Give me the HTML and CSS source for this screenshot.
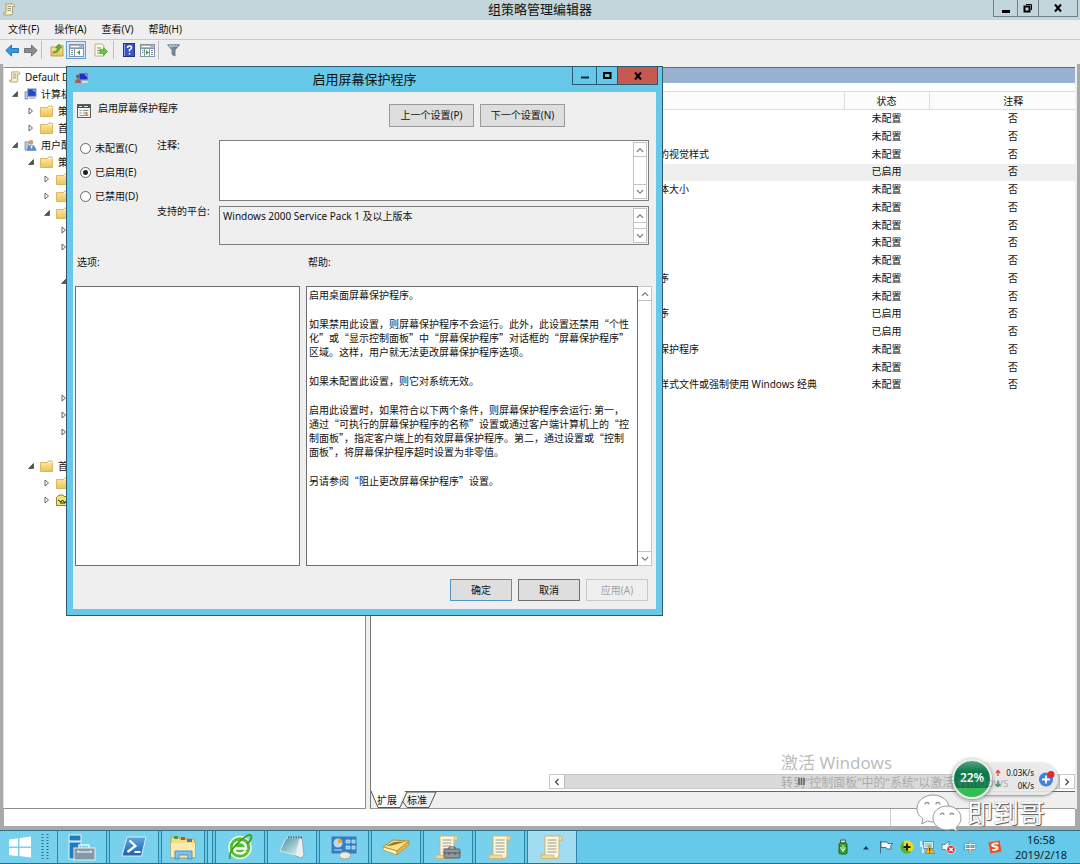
FILE: index.html
```html
<!DOCTYPE html>
<html lang="zh-CN">
<head>
<meta charset="utf-8">
<title>组策略管理编辑器</title>
<link rel="stylesheet" href="styles.css">
</head>
<body>
<svg class="defs" aria-hidden="true">
  <defs>
    <linearGradient id="g-folder" x1="0" y1="0" x2="0" y2="1"><stop offset="0" stop-color="#fdeaa6"/><stop offset="1" stop-color="#ecc356"/></linearGradient>
    <linearGradient id="g-blue" x1="0" y1="0" x2="0" y2="1"><stop offset="0" stop-color="#5fa8e0"/><stop offset="1" stop-color="#1d5ea8"/></linearGradient>
    <linearGradient id="g-note" x1="0" y1="0" x2="1" y2="1"><stop offset="0" stop-color="#3f8f9f"/><stop offset="1" stop-color="#e6f3f5"/></linearGradient>
    <linearGradient id="g-funnel" x1="0" y1="0" x2="1" y2="0"><stop offset="0" stop-color="#9db4c4"/><stop offset="1" stop-color="#47637a"/></linearGradient>
    <symbol id="folder" viewBox="0 0 13 12"><path d="M.5 2.500h7l1-1.500h3.500l.5 1v9.500H.5z" fill="url(#g-folder)" stroke="#d5a94a" stroke-width=".8"/><path d="M8 2.500h4.500" stroke="#fff6d0"/></symbol>
    <symbol id="scroll" viewBox="0 0 24 26"><path d="M5 2h15q3 0 2.500 4H19v15q0 3-3 3.500H2q-2-.5-1.500-3.500H5z" fill="#fdf6d8" stroke="#c9b377"/><path d="M19 6V3.500q.5-1.500 2-1.500 2 .5 1.500 4zM2 21h12v2q0 1.500 2 1.500H3Q.8 24 .8 21z" fill="#efdb9c" stroke="#c9b377" stroke-width=".7"/><path d="M7.500 6h9M7.500 9h9M7.500 12h9M7.500 15h9M7.500 18h9" stroke="#8f9a9c"/></symbol>
    <symbol id="scroll-small" viewBox="0 0 12 13"><path d="M3 1h7.500q1.200.3 1 2.500H9.500V10q0 2-1.500 2H1.500Q.3 11.800.5 10H3z" fill="#fbf1cb" stroke="#a8946a" stroke-width=".9"/><path d="M4.500 3.500h3.500M4.500 5.500h3.500M4.500 7.500h3.500" stroke="#8a8a80" stroke-width=".9"/></symbol>
    <symbol id="computer" viewBox="0 0 14 13"><rect x="4" y="1" width="9" height="8" fill="#2346c8" stroke="#8d97b5"/><path d="M8 2h4.500v3z" fill="#7da2ff"/><path d="M6 10h6l1 2H5z" fill="#b9bdc9"/><path d="M1 4h3v8H1z" fill="#b7c6dd" stroke="#6f7f9d" stroke-width=".7"/></symbol>
    <symbol id="screenuser" viewBox="0 0 14 13"><rect x="4" y="1" width="9" height="7" fill="#1d2fc0" stroke="#a7b0c8"/><path d="M9 2h3.500v4z" fill="#6f8cff"/><path d="M7 9h5l1.500 2H6z" fill="#d7dae0"/><circle cx="3" cy="4.500" r="2" fill="#7c5a54"/><path d="M0 11q0-4 3-4t3.500 4z" fill="#a5604f"/></symbol>
    <symbol id="closed" viewBox="0 0 6 8"><path d="M1 1v6l3.500-3z" fill="#fff" stroke="#555" stroke-width=".9"/></symbol>
    <symbol id="opened" viewBox="0 0 6 6"><path d="M5.500.5v5h-5z" fill="#555" stroke="#333" stroke-width=".6"/></symbol>
    <symbol id="up" viewBox="0 0 8 8"><path d="M1.500 5.500L4 3l2.500 2.500" fill="none" stroke="#777" stroke-width=".9"/></symbol>
    <symbol id="down" viewBox="0 0 8 8"><path d="M1.500 2.500L4 5l2.500-2.500" fill="none" stroke="#777" stroke-width=".9"/></symbol>
    <symbol id="panel" viewBox="0 0 15 13"><rect x=".5" y=".5" width="14" height="12" fill="#fff" stroke="#8793a3"/><path d="M1 1h13v3H1z" fill="#aab6c6"/><path d="M1 4.500h13" stroke="#8793a3"/><path d="M2 2.500h8" stroke="#fff"/></symbol>
  </defs>
</svg>

<div class="desktop">
  <header class="titlebar">
    <svg class="titlebar-icon"><use href="#scroll-small"/></svg>
    <h1 class="titlebar-text">组策略管理编辑器</h1>
    <div class="win-buttons">
      <button class="win-btn" aria-label="最小化"><svg width="10" height="10"><path d="M1 8.500h8" stroke="#000" stroke-width="3"/></svg></button>
      <button class="win-btn win-btn-max" aria-label="还原"><svg width="10" height="10"><path d="M1.500 3.500h5v5h-5z" fill="none" stroke="#000" stroke-width="2"/><path d="M3 1.500h5.500V7" fill="none" stroke="#000"/></svg></button>
      <button class="win-btn win-btn-close" aria-label="关闭"><svg width="10" height="10"><path d="M2 1.500l6 7M8 1.500l-6 7" stroke="#000" stroke-width="2"/></svg></button>
    </div>
  </header>

  <nav class="menubar">
    <button class="menu">文件(F)</button>
    <button class="menu">操作(A)</button>
    <button class="menu">查看(V)</button>
    <button class="menu">帮助(H)</button>
  </nav>

  <div class="toolbar">
    <div class="tool-group">
      <button class="tool" aria-label="后退"><svg width="14" height="13"><path d="M.8 6.500L6.500 1v3.500h7v4h-7V12z" fill="#2d9be6" stroke="#1b6fb3" stroke-width=".9"/></svg></button>
      <button class="tool" aria-label="前进"><svg width="14" height="13"><path d="M13.200 6.500L7.500 1v3.500h-7v4h7V12z" fill="#8c8c8c" stroke="#6b6b6b" stroke-width=".9"/></svg></button>
    </div>
    <div class="tool-group">
      <button class="tool" aria-label="上移"><svg width="14" height="14" viewBox="0 0 14 14"><path d="M1 4h5l1-1.500h6V13H1z" fill="url(#g-folder)" stroke="#b89142" stroke-width=".8"/><path d="M3 9q4 0 4.500-4H5.500L9 1l3 4h-2q-1 5-7 5z" fill="#54b52f" stroke="#398a1c" stroke-width=".5"/></svg></button>
      <button class="tool tool-on" aria-label="显示树"><svg width="15" height="13" viewBox="0 0 15 13"><use href="#panel"/><path d="M5.500 5v7.500" stroke="#8793a3"/><path d="M2 6.500h2M2 8.500h2M2 10.500h2" stroke="#6f8fb0"/><path d="M11 6v5L8 8.500z" fill="#3da32c"/></svg></button>
      <button class="tool tool-export" aria-label="导出"><svg width="14" height="14" viewBox="0 0 14 14"><path d="M1 1h7l2 2v10H1z" fill="#fffbe2" stroke="#a8a07c" stroke-width=".8"/><path d="M3 5h4M3 7.500h3M3 10h4" stroke="#7d8791"/><path d="M6 6.500h3.500V4.500l4 4-4 4v-2H6z" fill="#63c546" stroke="#3f9a2a" stroke-width=".6"/></svg></button>
    </div>
    <div class="tool-group">
      <button class="tool" aria-label="帮助"><svg width="12" height="14"><rect x=".5" y=".5" width="11" height="13" fill="#3657c0" stroke="#20357f"/><path d="M1.500 1v12" stroke="#8fa4e8"/><path d="M4.500 5q0-2 2-2t2 1.700q0 1.200-2 2.300v1.500M6.500 10v1.500" fill="none" stroke="#fff" stroke-width="1.500"/></svg></button>
      <button class="tool" aria-label="属性"><svg width="15" height="13" viewBox="0 0 15 13"><use href="#panel"/><path d="M9.500 5v7.500M4.500 5v7.500" stroke="#8793a3"/><path d="M11 6.500h2M11 8.500h2M11 10.500h2M2 6.500h1.500M2 8.500h1.500" stroke="#6f8fb0"/><path d="M6 6v5l3-2.500z" fill="#3da32c"/></svg></button>
    </div>
    <div class="tool-group">
      <button class="tool" aria-label="筛选"><svg width="13" height="13"><path d="M.5.8h12L8 6v6l-3-1.500V6z" fill="url(#g-funnel)" stroke="#5d7688" stroke-width=".8"/><path d="M2 2h9" stroke="#d7e3ea"/></svg></button>
    </div>
  </div>

  <main class="workspace">
    <ul class="tree">
      <li class="node level-0"><svg class="node-icon"><use href="#scroll-small"/></svg><span>Default Domain</span></li>
      <li class="node level-1"><svg class="twist"><use href="#opened"/></svg><svg class="node-icon"><use href="#computer"/></svg><span>计算机配置</span></li>
      <li class="node level-2"><svg class="twist"><use href="#closed"/></svg><svg class="node-icon"><use href="#folder"/></svg><span>策略</span></li>
      <li class="node level-2"><svg class="twist"><use href="#closed"/></svg><svg class="node-icon"><use href="#folder"/></svg><span>首选项</span></li>
      <li class="node level-1"><svg class="twist"><use href="#opened"/></svg><svg class="node-icon" viewBox="0 0 14 13"><path d="M1 3h4v9H1z" fill="#b7c6dd" stroke="#6f7f9d" stroke-width=".7"/><circle cx="7.500" cy="3.500" r="2.500" fill="#c99b76"/><path d="M3.500 12.500Q4 6.500 8 6.500t5 6z" fill="#5b8fc9" stroke="#47709e" stroke-width=".5"/><path d="M7 7l1 4 1.500-4z" fill="#fff"/></svg><span>用户配置</span></li>
      <li class="node level-2"><svg class="twist"><use href="#opened"/></svg><svg class="node-icon"><use href="#folder"/></svg><span>策略</span></li>
      <li class="node level-3"><svg class="twist"><use href="#closed"/></svg><svg class="node-icon"><use href="#folder"/></svg></li>
      <li class="node level-3"><svg class="twist"><use href="#closed"/></svg><svg class="node-icon"><use href="#folder"/></svg></li>
      <li class="node level-3"><svg class="twist"><use href="#opened"/></svg><svg class="node-icon"><use href="#folder"/></svg></li>
      <li class="node level-4"><svg class="twist"><use href="#closed"/></svg></li>
      <li class="node level-4"><svg class="twist"><use href="#closed"/></svg></li>
      <li class="node level-4"></li>
      <li class="node level-4"><svg class="twist"><use href="#opened"/></svg></li>
      <li class="node-children"></li>
      <li class="node level-4"><svg class="twist"><use href="#closed"/></svg></li>
      <li class="node level-4"><svg class="twist"><use href="#closed"/></svg></li>
      <li class="node level-4"><svg class="twist"><use href="#closed"/></svg></li>
      <li class="node level-4"></li>
      <li class="node level-2"><svg class="twist"><use href="#opened"/></svg><svg class="node-icon"><use href="#folder"/></svg><span>首选项</span></li>
      <li class="node level-3"><svg class="twist"><use href="#closed"/></svg><svg class="node-icon"><use href="#folder"/></svg></li>
      <li class="node level-3"><svg class="twist"><use href="#closed"/></svg><svg class="node-icon" viewBox="0 0 13 12"><path d="M.5 3.500L3 1h4l1 1.500h4.500v9H.5z" fill="#f3e36a" stroke="#8d8434"/><path d="M2 6l3 2 1.500-2L9 9l2-3M4 9h5" fill="none" stroke="#222"/></svg></li>
    </ul>

    <section class="details">
      <div class="band"></div>
      <div class="details-body">
        <div class="extended"></div>
        <div class="list">
          <table class="policies">
            <thead><tr><th class="col-name"></th><th class="col-state">状态</th><th class="col-note">注释</th></tr></thead>
            <tbody>
              <tr><td></td><td>未配置</td><td>否</td></tr>
              <tr><td></td><td>未配置</td><td>否</td></tr>
              <tr><td>阻止更改窗口和按钮的视觉样式</td><td>未配置</td><td>否</td></tr>
              <tr class="selected"><td></td><td>已启用</td><td>否</td></tr>
              <tr><td>禁止选择视觉样式字体大小</td><td>未配置</td><td>否</td></tr>
              <tr><td></td><td>未配置</td><td>否</td></tr>
              <tr><td></td><td>未配置</td><td>否</td></tr>
              <tr><td></td><td>未配置</td><td>否</td></tr>
              <tr><td></td><td>未配置</td><td>否</td></tr>
              <tr><td>阻止更改屏幕保护程序</td><td>未配置</td><td>否</td></tr>
              <tr><td></td><td>未配置</td><td>否</td></tr>
              <tr><td>密码保护屏幕保护程序</td><td>已启用</td><td>否</td></tr>
              <tr><td></td><td>已启用</td><td>否</td></tr>
              <tr><td>强制使用特定的屏幕保护程序</td><td>未配置</td><td>否</td></tr>
              <tr><td></td><td>未配置</td><td>否</td></tr>
              <tr><td>强制使用特定的视觉样式文件或强制使用 Windows 经典</td><td>未配置</td><td>否</td></tr>
            </tbody>
          </table>
          <div class="hscroll">
            <button class="hscroll-btn" aria-label="向左滚动"><svg width="8" height="8"><path d="M5.500 1L2.500 4l3 3" fill="none" stroke="#444" stroke-width="1.200"/></svg></button>
            <div class="hscroll-thumb"><svg width="8" height="7"><path d="M1 0v7M3.500 0v7M6 0v7" stroke="#555" stroke-width="1.500"/></svg></div>
            <button class="hscroll-btn" aria-label="向右滚动"><svg width="8" height="8"><path d="M2.500 1l3 3-3 3" fill="none" stroke="#444" stroke-width="1.200"/></svg></button>
          </div>
        </div>
      </div>
      <div class="tabs">
        <svg class="tabs-shape" width="66" height="18"><path d="M0 0l7 16.500h20L34 0z" fill="#fff"/><path d="M0 0l7 16.500h22L36 1h29l-7 15.500H36L31.500 10" fill="none" stroke="#555"/></svg>
        <button class="tab">扩展</button>
        <button class="tab">标准</button>
      </div>
    </section>
  </main>

  <footer class="statusbar"><span class="status-cell"></span><span class="status-end"></span></footer>

  <div class="taskbar">
    <button class="task task-start" aria-label="开始"><svg width="24" height="22"><path d="M1 3.500l9-1.200v8.200H1zM11.500 2L23 .5v10H11.500zM1 12h9v8.200l-9-1.200zM11.500 12H23v9.500L11.500 20z" fill="#fff"/></svg><svg width="8" height="26"><path d="M1.500 0v26M6.500 0v26" stroke="#1f6f91" stroke-width="2" stroke-dasharray="1 2"/></svg></button>
    <button class="task" aria-label="服务器管理器"><svg width="28" height="27"><path d="M1 1h12v6H1zM1 8h12v17H1z" fill="#1e7cc0" stroke="#e9f6fb"/><path d="M11 14V11h10v3" fill="none" stroke="#eef3f5" stroke-width="1.500"/><rect x="6" y="14" width="21" height="12" fill="#8299a8" stroke="#e9f0f3"/><path d="M9 18h15M9 18l2-1.500M24 18l-2-1.500" stroke="#fff"/></svg></button>
    <button class="task" aria-label="PowerShell"><svg width="26" height="22"><path d="M6 1h19l-4.500 19H1z" fill="url(#g-blue)" stroke="#dcecf7"/><path d="M8.500 4.500l6 5.500-8 6M13.500 16h6" fill="none" stroke="#fff" stroke-width="2.200"/></svg></button>
    <button class="task task-files" aria-label="文件资源管理器"><svg width="28" height="27"><path d="M2 3h8l1 2h14l1 3v16H2z" fill="#f7dc86" stroke="#c79c3d"/><path d="M5 2h4v3H5z" fill="#3ba33b"/><path d="M12 3h4v3h-4z" fill="#d8442f"/><path d="M18 5h5v3h-5z" fill="#4479c9"/><path d="M2 9h24v14H2z" fill="#fbeab0"/><path d="M6 25v-8h17v8h-4v-4h-9v4z" fill="#7cc3ea" stroke="#4b93c2"/></svg></button>
    <span class="task-stack"></span>
    <button class="task" aria-label="浏览器"><svg width="26" height="26"><circle cx="13" cy="13.500" r="11" fill="#4fc22d"/><circle cx="13" cy="13.500" r="11" fill="none" stroke="#f0fbea" stroke-width="1.500"/><path d="M7.500 14.500h11.500q0-6.500-6-6.500t-6 6q0 5.500 6 5.500 4 0 5.500-3" fill="none" stroke="#fff" stroke-width="2.600"/><path d="M3 25Q1 18 12 8T24 2q2 2-4 8" fill="none" stroke="#3aa31e" stroke-width="1.800"/></svg></button>
    <button class="task" aria-label="记事本"><svg width="26" height="24"><path d="M20 2l3 .5L25 20l-3 3-7-3z" fill="#edf0f0" stroke="#858f92" stroke-width=".7"/><path d="M7 3h14l-5 17L1 16z" fill="url(#g-note)" stroke="#d5e6e9"/><path d="M9 2.500h14" stroke="#57676b" stroke-width="1.800" stroke-dasharray="1.500 1"/></svg></button>
    <button class="task" aria-label="控制面板"><svg width="28" height="26"><rect x="1" y="2" width="26" height="18" rx="1" fill="#2f7fc6" stroke="#8fc4ec"/><circle cx="8" cy="9" r="4.500" fill="#b9dcf5"/><path d="M8 9V4.500A4.500 4.500 0 0 1 12.500 9z" fill="#f2a531"/><path d="M16 6h4v3h-4zM22 6h3v3h-3zM16 12h4v3h-4zM22 12h3v3h-3z" fill="#7fc3ef" stroke="#cfe9fa" stroke-width=".7"/><path d="M4 16h8" stroke="#bfe0f7"/><ellipse cx="15" cy="21.500" rx="5.500" ry="3.500" fill="#efe9e4" stroke="#ada59d"/></svg></button>
    <button class="task" aria-label="便笺"><svg width="28" height="18"><path d="M1 9L11 2l16 1L15 13z" fill="#f6e085" stroke="#b08b2c"/><path d="M1 9l14 4v4L1 12z" fill="#fdf3bb" stroke="#b08b2c" stroke-width=".7"/><path d="M15 13L27 3v4L15 17z" fill="#dcb64f" stroke="#b08b2c" stroke-width=".7"/><path d="M4 8L12 4l12-.5-14 4z" fill="#8f7735"/></svg></button>
    <button class="task" aria-label="组策略管理"><svg width="26" height="26" viewBox="0 0 26 26"><svg width="24" height="26"><use href="#scroll"/></svg><rect x="9" y="15" width="16" height="9" rx="1" fill="#8e979e" stroke="#596269"/><path d="M14 15v-2h6v2M9 19h16M14 18v3M20 18v3" fill="none" stroke="#50585e"/></svg></button>
    <button class="task" aria-label="策略编辑器"><svg width="24" height="26"><use href="#scroll"/></svg></button>
    <button class="task task-active" aria-label="组策略管理编辑器"><svg width="24" height="26"><use href="#scroll"/></svg></button>

    <div class="tray">
      <svg width="10" height="16"><path d="M2.500 1h5v3h-5z" fill="#ddd" stroke="#555"/><rect x="1" y="4" width="8" height="11" rx="1.500" fill="#38a02f" stroke="#1d5f1a"/><path d="M5 6v7M3 8v2l2 1.500L7 10V8" fill="none" stroke="#fff" stroke-width=".9"/></svg>
      <svg width="8" height="5"><path d="M1 4.500L4 1l3 3.500z" fill="#123c55"/></svg>
      <svg width="15" height="14"><path d="M1.500 1v12.500M2 2h6l1 1.500h4.500l-2 2.500 1 3H8L7 7.500H2z" fill="#f5fbfd" stroke="#3c6477" stroke-width=".9"/></svg>
      <svg width="14" height="14"><circle cx="7" cy="7" r="6.500" fill="#f4d91b"/><path d="M2.500 12A6.500 6.500 0 0 1 4 1.200Q2 8 8 10.500T11.500 11.700A6.500 6.500 0 0 1 2.500 12z" fill="#58b531"/><path d="M7 3.500v7M3.500 7h7" stroke="#123" stroke-width="2"/></svg>
      <svg width="15" height="14"><rect x="4" y="2" width="9" height="6" fill="#9fd2e6" stroke="#fff"/><path d="M1 1v5h2v7" fill="none" stroke="#f8fcfe" stroke-width="1.500"/><path d="M3.500 1.500h10v7h-10z" fill="none" stroke="#456" stroke-width=".6"/><path d="M9.500 5l5 8.500h-9z" fill="#fbbd1f" stroke="#a87308" stroke-width=".7"/><path d="M9.700 8v3M9.700 11.800v1" stroke="#222" stroke-width="1.200"/></svg>
      <svg width="15" height="14"><path d="M1 4.500h3L8 1v12L4 9.500H1z" fill="#eef6f9" stroke="#567381" stroke-width=".8"/><circle cx="10" cy="9.500" r="4.200" fill="#d8322a" stroke="#fff" stroke-width=".7"/><path d="M8.300 7.800l3.500 3.500M11.800 7.800l-3.500 3.500" stroke="#fff" stroke-width="1.300"/></svg>
      <span class="ime">中</span>
      <svg width="14" height="14"><path d="M.5 2.500L11.500.5l2 11L2.500 13.500z" fill="#ee4f22"/><path d="M10.300 3.500q-5-.5-6 1t2.500 2 2.700 2-5.500 1.300" fill="none" stroke="#fff" stroke-width="1.800"/></svg>
    </div>
    <div class="clock"><time>16:58</time><time>2019/2/18</time></div>
  </div>

  <div class="netball">
    <div class="netball-pill">
      <svg class="netball-arrows" width="8" height="20"><path d="M4 7V1.500M1.800 4L4 1.500 6.200 4" fill="none" stroke="#e0443c" stroke-width="1.300"/><path d="M4 12v5.500M1.800 15L4 17.500 6.200 15" fill="none" stroke="#2f9d58" stroke-width="1.300"/></svg>
      <div class="netball-speed"><span>0.03K/s</span><span>0K/s</span></div>
      <svg width="17" height="18"><circle cx="8" cy="9.500" r="7" fill="#3f82e0"/><path d="M8 5.500v8M4 9.500h8" stroke="#fff" stroke-width="1.800"/><circle cx="13" cy="4.500" r="3.500" fill="#e02b2b"/></svg>
    </div>
    <div class="netball-disc">22%</div>
  </div>

  <div class="activate">
    <p class="activate-title">激活 Windows</p>
    <p class="activate-text">转到“控制面板”中的“系统”以激活 Windows</p>
  </div>

  <div class="signature">
    <svg width="46" height="40" viewBox="0 0 46 40"><g stroke="#999" stroke-width="1"><path d="M17 2C8 2 1 8 1 15.500c0 4.500 2.500 8 6 10.500L5.500 31l6-3q3 1 6.500 1 14-1 15-14C33 8 26 2 17 2z" fill="#fff"/><path d="M31 13c-8 0-14 5.500-14 12s6 12 14 12q3 0 5.500-1l5 2.500-1.500-4c3-2.500 5-5.500 5-9.500 0-6.500-6-12-14-12z" fill="#fff"/></g><g fill="none" stroke="#999" stroke-width="1.300"><path d="M9 11.500a2 2 0 0 1 4 0M20 11.500a2 2 0 0 1 4 0M24.500 22a1.700 1.700 0 0 1 3.500 0M34 22a1.700 1.700 0 0 1 3.500 0"/></g></svg>
    <span>即到哥</span>
  </div>

  <section class="dialog" role="dialog" aria-labelledby="dialog-title">
    <header class="dialog-bar">
      <svg class="dialog-icon"><use href="#screenuser"/></svg>
      <h2 class="dialog-title" id="dialog-title">启用屏幕保护程序</h2>
      <div class="dialog-btns">
        <button class="dlg-btn" aria-label="最小化"><svg width="10" height="10"><path d="M1 6.500h8" stroke="#0a2c3a" stroke-width="2"/></svg></button>
        <button class="dlg-btn dlg-btn-max" aria-label="最大化"><svg width="10" height="10"><path d="M2 2h6.500v5H2z" fill="none" stroke="#000" stroke-width="2"/></svg></button>
        <button class="dlg-btn dlg-btn-close" aria-label="关闭"><svg width="10" height="10"><path d="M2 1.500l6 7M8 1.500l-6 7" stroke="#000" stroke-width="2"/></svg></button>
      </div>
    </header>
    <form class="dialog-body">
      <div class="setting-head">
        <svg class="setting-icon" width="14" height="14"><rect x=".5" y=".5" width="13" height="13" fill="#f6f7f2" stroke="#55605f"/><path d="M1 1h12v3H1z" fill="#2f5f5c"/><path d="M2 2.500h3M7 2.500h4" stroke="#d9e8e6"/><path d="M2.500 6.500h2M6 6.500h5.500M2.500 9h2M6 9h3M2.500 11.500h9" stroke="#8a938f"/><path d="M9.500 8v4" stroke="#c98b3b" stroke-width="2"/></svg>
        <span class="setting-name">启用屏幕保护程序</span>
        <button type="button" class="button button-nav">上一个设置(P)</button>
        <button type="button" class="button button-nav">下一个设置(N)</button>
      </div>

      <div class="setting-main">
        <div class="states">
          <label class="state"><input type="radio" name="state">未配置(C)</label>
          <label class="state"><input type="radio" name="state" checked>已启用(E)</label>
          <label class="state"><input type="radio" name="state">已禁用(D)</label>
        </div>
        <label class="field-label" for="note">注释:</label>
        <div class="field field-note">
          <textarea id="note"></textarea>
          <div class="vscroll"><button type="button" aria-label="向上"><svg><use href="#up"/></svg></button><button type="button" aria-label="向下"><svg><use href="#down"/></svg></button></div>
        </div>
        <label class="field-label" for="platform">支持的平台:</label>
        <div class="field field-platform">
          <textarea id="platform" readonly>Windows 2000 Service Pack 1 及以上版本</textarea>
          <div class="vscroll"><button type="button" aria-label="向上"><svg><use href="#up"/></svg></button><button type="button" aria-label="向下"><svg><use href="#down"/></svg></button></div>
        </div>
      </div>

      <div class="panes">
        <h3 class="pane-label">选项:</h3>
        <h3 class="pane-label">帮助:</h3>
        <div class="pane"></div>
        <div class="pane-wrap">
          <div class="pane help">
            <p>启用桌面屏幕保护程序。</p>
            <p>如果禁用此设置，则屏幕保护程序不会运行。此外，此设置还禁用“个性<br>化”或“显示控制面板”中“屏幕保护程序”对话框的“屏幕保护程序”<br>区域。这样，用户就无法更改屏幕保护程序选项。</p>
            <p>如果未配置此设置，则它对系统无效。</p>
            <p>启用此设置时，如果符合以下两个条件，则屏幕保护程序会运行: 第一，<br>通过“可执行的屏幕保护程序的名称”设置或通过客户端计算机上的“控<br>制面板”，指定客户端上的有效屏幕保护程序。第二，通过设置或“控制<br>面板”，将屏幕保护程序超时设置为非零值。</p>
            <p>另请参阅“阻止更改屏幕保护程序”设置。</p>
          </div>
          <div class="vscroll vscroll-help"><button type="button" aria-label="向上"><svg><use href="#up"/></svg></button><button type="button" aria-label="向下"><svg><use href="#down"/></svg></button></div>
        </div>
      </div>

      <div class="actions">
        <button type="button" class="button button-default">确定</button>
        <button type="button" class="button button-strong">取消</button>
        <button type="button" class="button" disabled>应用(A)</button>
      </div>
    </form>
  </section>
</div>
</body>
</html>
```
FILE: styles.css
```css
* { box-sizing: border-box; }

body {
  margin: 0;
  font: 10px/14px "Noto Sans", "Noto Sans CJK SC", sans-serif;
  color: #111;
  background: #a9a9a9;
}

h1, h2, h3, p, ul { margin: 0; padding: 0; font-weight: normal; }
button, input, textarea { font: inherit; color: inherit; margin: 0; }
button { padding: 0; border: 0; background: none; display: flex; align-items: center; justify-content: center; white-space: nowrap; }
svg { display: block; flex: none; }
.defs { position: absolute; width: 0; height: 0; }

.desktop { position: relative; display: flex; flex-direction: column; min-height: 100vh; overflow: hidden; }

/* main window caption */
.titlebar { display: flex; align-items: center; height: 20px; padding: 0 2px 2px 3px; background: #c3d6dc; }
.titlebar-icon { width: 12px; height: 13px; }
.titlebar-text { flex: 1; text-align: center; font-size: 13px; line-height: 18px; padding-left: 72px; }
.win-buttons { display: flex; align-self: flex-start; height: 17px; border: 1px solid #6f8289; border-top: 0; }
.win-btn { width: 23px; }
.win-btn-max { width: 22px; border: solid #6f8289; border-width: 0 1px; }
.win-btn-close { width: 38px; }

.menubar { display: flex; gap: 15px; height: 20px; padding: 0 8px 2px; background: #efefef; border-bottom: 1px solid #c9c9c9; }
.toolbar { display: flex; align-items: center; height: 24px; padding: 0 2px 4px; background: #efefef; }
.tool-group { display: flex; padding-right: 1px; }
.tool-group + .tool-group { padding-left: 5px; border-left: 1px solid #bdbdbd; }
.tool { width: 19px; height: 18px; }
.tool-on { width: 20px; border: 1px solid #53a7dc; background: #d4ebf8; }
.tool-export { width: 26px; padding-left: 4px; }

/* tree and details */
.workspace { flex: 1; display: flex; gap: 4px; padding: 3px 5px 0 3px; background: linear-gradient(#a9a9a9, #a9a9a9) 0 0 / 3px 100% no-repeat, linear-gradient(#a9a9a9, #a9a9a9) 100% 0 / 3px 100% no-repeat, #efefef; }
.tree { width: 363px; list-style: none; background: #fff; border: 1px solid #8b8f94; border-left-color: #ddd; }
.node { display: flex; align-items: center; height: 17px; gap: 4px; white-space: nowrap; overflow: hidden; }
.node-icon { width: 13px; height: 12px; margin-left: 4px; }
.twist { width: 6px; height: 8px; }
.level-0 .node-icon { margin: 0; }
.level-0 { padding-left: 4px; }
.level-1 { padding-left: 8px; gap: 2px; }
.level-1 span { padding-left: 2px; }
.level-2 { padding-left: 24px; gap: 2px; }
.level-2 span { padding-left: 3px; }
.level-3 { padding-left: 40px; gap: 2px; }
.level-4 { padding-left: 57px; }
.node-children { height: 100px; }

.details { flex: 1; min-width: 0; display: flex; flex-direction: column; border-top: 1px solid #5c6b80; border-left: 1px solid #777; }
.band { height: 15px; background: #98b1cf; }
.details-body { flex: 1; display: flex; background: #fff; padding: 8px 0 2px; }
.extended { width: 178px; }
.list { flex: 1; min-width: 0; display: flex; flex-direction: column; justify-content: space-between; }
.policies { width: 100%; table-layout: fixed; border-collapse: collapse; }
.policies tr { height: 18px; }
.policies tbody tr:nth-child(4n) { height: 17px; }
.policies th { height: 18px; padding: 0; font-weight: normal; border: solid #dedede; border-width: 1px 0 1px 1px; background: #fcfcfc; }
.policies td { padding: 0 0 2px; line-height: 14px; text-align: center; white-space: nowrap; }
.policies td:first-child { text-align: left; padding-left: 20px; }
.policies td:last-child, .policies .col-note { padding-left: 22px; }
.policies .col-name { border-left: 0; }
.col-state { width: 85px; }
.col-note { width: 146px; }
.selected { background: #efefef; }

.hscroll { display: flex; height: 15px; border: 1px solid #c8c8c8; background: #fff; }
.hscroll-btn { width: 14px; }
.hscroll-thumb { flex: 1; display: flex; align-items: center; justify-content: center; padding-right: 20px; background: #dadada; border: solid #bbb; border-width: 0 1px; }

.tabs { position: relative; display: flex; height: 18px; padding: 0 0 1px 5px; background: #efefef; border-top: 1px solid #666; border-bottom: 1px solid #999; }
.tabs-shape { position: absolute; left: 0; top: -1px; }
.tab { position: relative; width: 22px; margin-right: 8px; }

.statusbar { display: flex; height: 21px; padding: 0 5px 4px 4px; background: #a9a9a9; }
.status-cell { flex: 1; background: #fff; }
.status-end { width: 185px; background: #fff; border-left: 1px solid #ccc; }

/* taskbar */
.taskbar { display: flex; height: 34px; background: #67c9e9; border-top: 1px solid #2c6f87; border-bottom: 1px solid #2c6f87; }
.task { width: 50px; margin-right: 2px; border: solid #2f86a3; border-width: 0 1px; background: #77d1ec; }
.task-start { width: 57px; margin-right: 0; gap: 9px; border: 0; }
.task-active { background: #a2dcf1; }
.task-files { width: 44px; }
.task-stack { width: 6px; margin-right: 2px; border: solid #2f86a3; border-width: 0 1px; background: #77d1ec; }
.tray { flex: 1; display: flex; align-items: center; justify-content: flex-end; gap: 6px; }
.tray svg:nth-child(1) { margin-right: 8px; }
.tray svg:nth-child(2) { margin-right: 3px; }
.ime { width: 16px; margin-right: 4px; text-align: center; font-size: 13px; color: #fff; text-shadow: 0 0 1px #234, 0 0 1px #234; }
.clock { width: 78px; display: flex; flex-direction: column; align-items: center; justify-content: center; font-size: 11px; line-height: 15px; color: #0b2430; }

/* overlays on the desktop */
.activate { position: absolute; right: 37px; bottom: 72px; width: 262px; color: rgba(120, 120, 120, .5); white-space: nowrap; }
.activate-title { font-size: 17px; line-height: 22px; }
.activate-text { font-size: 12px; line-height: 18px; }

.netball { position: absolute; right: 22px; bottom: 65px; width: 106px; height: 40px; display: flex; align-items: center; }
.netball-disc { position: absolute; left: 0; top: 0; width: 40px; height: 40px; border: 2px solid #e6efe8; border-radius: 50%; background: linear-gradient(rgba(255, 255, 255, .3), transparent 30%), linear-gradient(#0f7a49 75%, #35bd55 75%); color: #fff; font-size: 12px; font-weight: 600; line-height: 34px; text-align: center; box-shadow: 0 1px 4px #777; }
.netball-pill { flex: 1; display: flex; align-items: center; height: 32px; margin-left: 20px; padding: 0 3px 0 22px; border-radius: 16px; background: rgba(232, 232, 232, .92); box-shadow: 0 1px 3px #888; }
.netball-speed { flex: 1; display: flex; flex-direction: column; align-items: flex-end; padding-right: 4px; font-size: 8px; line-height: 13px; }

.signature { position: absolute; right: 35px; bottom: 31px; display: flex; align-items: center; gap: 5px; font-size: 26px; line-height: 32px; color: #fff; text-shadow: 1px 1px 1px #555, 0 0 1px #666; white-space: nowrap; }

/* policy dialog */
.dialog { position: absolute; left: 66px; top: 66px; width: 597px; padding: 0 6px 6px; border: 1px solid #2b5a70; background: #67c9e9; }
.dialog-bar { display: flex; align-items: center; height: 25px; padding: 0 0 2px 2px; }
.dialog-icon { width: 14px; height: 13px; }
.dialog-title { flex: 1; padding-left: 68px; font-size: 13px; line-height: 18px; text-align: center; }
.dialog-btns { display: flex; align-self: flex-start; height: 18px; margin-right: -2px; border: 1px solid #2b5a70; border-top: 0; }
.dlg-btn { width: 23px; }
.dlg-btn-max { width: 22px; border: solid #2b5a70; border-width: 0 1px; }
.dlg-btn-close { width: 39px; background: #c75a50; }

.dialog-body { padding: 12px 4px 8px 2px; background: #efefef; }
.setting-head { display: flex; align-items: flex-start; padding-right: 87px; }
.setting-icon { margin: 0 7px 0 2px; }
.setting-name { flex: 1; line-height: 8px; }
.button { width: 62px; height: 22px; padding-bottom: 1px; background: #dedede; border: 1px solid #9a9a9a; }
.button-nav { width: 85px; height: 23px; margin-left: 6px; }
.button-default { border-color: #4f94c4; }
.button-strong { border-color: #707070; }
.button:disabled { color: #a3a3a3; background: #efefef; border-color: #c9c9c9; }

.setting-main { display: grid; grid-template-columns: 82px 62px 1fr; grid-template-rows: 61px 39px; row-gap: 5px; padding: 13px 3px 0 0; }
.states { grid-row: 1 / 3; display: flex; flex-direction: column; gap: 10px; padding: 1px 0 0 5px; }
.state { display: flex; align-items: center; gap: 4px; height: 14px; }
.state input { appearance: none; width: 11px; height: 11px; border: 1px solid #666; border-radius: 50%; background: #fff; }
.state input:checked { background: radial-gradient(circle, #222 0 2px, #fff 3px); }
.field-label { line-height: 10px; }
.field { display: flex; border: 1px solid #7d7d7d; background: #fff; }
.field textarea { flex: 1; padding: 2px 3px; border: 0; background: none; resize: none; overflow: hidden; outline: 0; }
.field-platform { background: #efefef; }
.vscroll { display: flex; flex-direction: column; justify-content: space-between; width: 14px; margin: 1px; border: 1px solid #c4c4c4; background: #fff; }
.vscroll button { height: 14px; border-bottom: 1px solid #c4c4c4; }
.vscroll button:last-child { border-bottom: 0; border-top: 1px solid #c4c4c4; }
.vscroll svg { width: 10px; height: 10px; }

.panes { display: grid; grid-template-columns: 225px 1fr; grid-template-rows: 41px 280px; column-gap: 6px; }
.pane-label { padding: 10px 2px 0; font-size: 10px; }
.pane { border: 1px solid #6f6f6f; background: #fff; }
.pane-wrap { display: flex; }
.help { flex: 1; display: flex; flex-direction: column; gap: 15px; padding: 1px 0 0 2px; font-family: "Noto Sans CJK SC", sans-serif; white-space: nowrap; }
.vscroll-help { margin: 0; border-left: 0; }

.actions { display: flex; justify-content: flex-end; gap: 6px; padding: 13px 4px 0 0; }
```
